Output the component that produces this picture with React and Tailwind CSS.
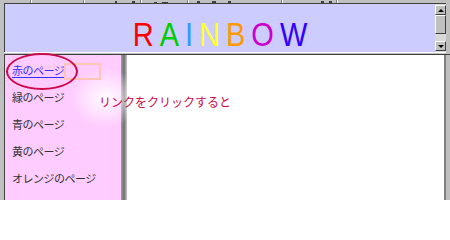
export default function App() {
  const letters = [
    ["R", "text-[#ff0000]"],
    ["A", "text-[#00cc00]"],
    ["I", "text-[#3399ff]"],
    ["N", "text-[#ffff33]"],
    ["B", "text-[#ff9900]"],
    ["O", "text-[#cc00cc]"],
    ["W", "text-[#3300ff]"],
  ];
  const links = ["緑のページ", "青のページ", "黄のページ", "オレンジのページ", "紫のページ"];
  return (
    <div className="relative w-[450px] h-[200px] overflow-hidden bg-[#c0c0c0] flex flex-col font-['Noto_Sans_CJK_JP',sans-serif]">
      {/* toolbar remnant */}
      <div className="h-[3px] shrink-0 flex">
        <div className="w-[31px] border-r border-[#808080]" />
        <div className="w-[53px] border-r border-[#808080] border-l border-l-white" />
        <div className="w-[57px] border-r border-[#808080] border-l border-l-white flex items-end gap-[15px] pl-[30px]">
          <span className="w-[2px] h-[2px] bg-[#404040]" />
          <span className="w-[3px] h-[2px] bg-[#404040]" />
        </div>
        <div className="w-[47px] border-r border-[#808080] border-l border-l-white flex items-end gap-[5px] pl-[12px]">
          <span className="w-[3px] h-[1px] bg-[#404040]" />
          <span className="w-[6px] h-[1px] bg-[#404040]" />
        </div>
        <div className="w-[94px] border-r border-[#808080] border-l border-l-white flex items-end gap-[12px] pl-[8px]">
          <span className="w-[3px] h-[2px] bg-[#404040]" />
          <span className="w-[4px] h-[2px] bg-[#404040]" />
          <span className="w-[3px] h-[2px] bg-[#404040]" />
        </div>
        <div className="w-[55px] border-r border-[#808080] border-l border-l-white flex items-end gap-[5px] pl-[38px]">
          <span className="w-[3px] h-[2px] bg-[#404040]" />
          <span className="w-[3px] h-[2px] bg-[#404040]" />
        </div>
        <div className="flex-1 border-l border-l-white" />
      </div>

      {/* top frame */}
      <div className="shrink-0 ml-[4px] mr-[4px] h-[49px] border-l border-t border-[#404040] bg-[#ccccff] flex">
        <div className="flex-1 flex justify-center pt-[15px] pl-[6px]">
          <div className="flex tracking-[6px] text-[29px] leading-none font-['Liberation_Sans',Arial,sans-serif] scale-y-[1.12] origin-top">
            {letters.map(([l, c]) => (
              <span key={l} className={c}>{l}</span>
            ))}
          </div>
        </div>
        <div className="w-[11px] flex flex-col pt-[1px] pb-[1px] bg-[#d8d8d8]">
          <div className="h-[10px] bg-[#c0c0c0] border-t border-l border-white border-r border-b border-r-[#404040] border-b-[#404040] flex items-center justify-center">
            <span className="w-0 h-0 border-l-[3px] border-r-[3px] border-b-[3px] border-l-transparent border-r-transparent border-b-black" />
          </div>
          <div className="h-[19px] bg-[#c0c0c0] border-t border-l border-white border-r border-b border-r-[#404040] border-b-[#404040]" />
          <div className="flex-1" />
          <div className="h-[10px] bg-[#c0c0c0] border-t border-l border-white border-r border-b border-r-[#404040] border-b-[#404040] flex items-center justify-center">
            <span className="w-0 h-0 border-l-[3px] border-r-[3px] border-t-[3px] border-l-transparent border-r-transparent border-t-black" />
          </div>
        </div>
      </div>

      <div className="shrink-0 h-[2px] ml-[4px] mr-[4px] border-t border-white" />

      {/* bottom frames */}
      <div className="flex-1 min-h-0 overflow-hidden flex ml-[4px] border-t border-l border-[#404040]">
        <div className="w-[116px] bg-[#ffccff] flex flex-col pt-[2px] pl-[7px] text-[11px] tracking-[-0.5px] text-[#333333]">
          <div className="h-[27px] shrink-0 flex items-center">
            <a className="text-[#3333ff] underline underline-offset-2">赤のページ</a>
          </div>
          {links.map((t) => (
            <div key={t} className="h-[27px] shrink-0 flex items-center">{t}</div>
          ))}
        </div>
        <div className="w-[6px] bg-gradient-to-r from-[#a0a0a0] via-[#707070] to-[#c8c8c8]" />
        <div className="flex-1 bg-white" />
        <div className="w-[6px] border-l-2 border-[#808080] bg-[#c0c0c0]" />
      </div>

      {/* annotations */}
      <div className="absolute left-[70px] top-[68px] w-[70px] h-[60px] rounded-full bg-[radial-gradient(closest-side,rgba(255,255,255,0.95),rgba(255,255,255,0))]" />
      <div className="absolute left-[64px] top-[63px] w-[37px] h-[17px] border-2 border-[#ffc4b8]" />
      <div className="absolute left-[6px] top-[53px] w-[72px] h-[37px] rounded-[50%] border-2 border-[#cc0b4a]" />
      <div className="absolute left-[99px] top-[94px] text-[12px] leading-[16px] text-[#cc0b4a]">
        リンクをクリックすると
      </div>
    </div>
  );
}
